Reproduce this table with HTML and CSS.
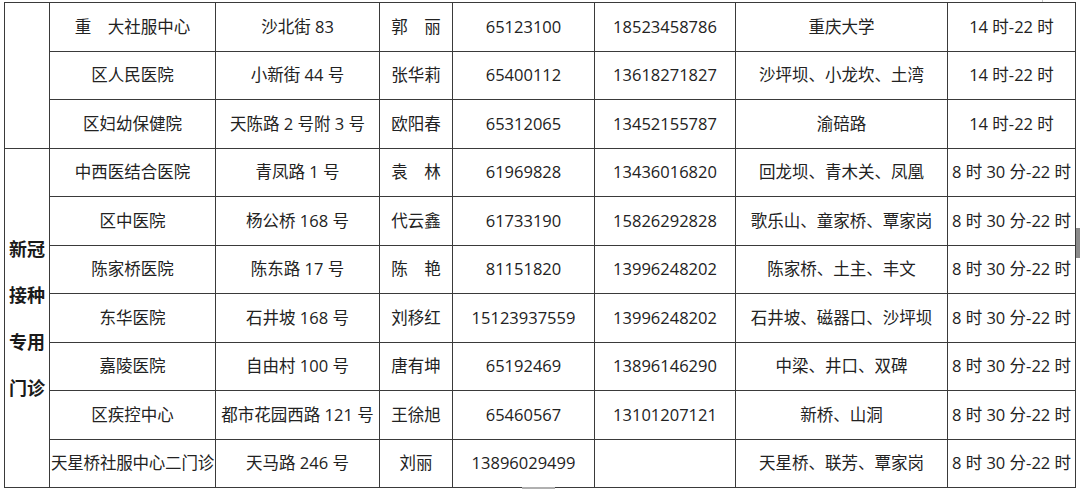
FILE: index.html
```html
<!DOCTYPE html>
<html lang="zh-CN">
<head>
<meta charset="utf-8">
<title>新冠接种专用门诊</title>
<link rel="stylesheet" href="styles.css">
</head>
<body>
<div class="page">
  <table class="clinics">
    <colgroup>
      <col class="c-cat">
      <col class="c-name">
      <col class="c-addr">
      <col class="c-person">
      <col class="c-tel">
      <col class="c-mobile">
      <col class="c-area">
      <col class="c-time">
    </colgroup>
    <tbody>
      <tr>
        <td class="cat" rowspan="3"></td>
        <td>重　大社服中心</td>
        <td>沙北街 83</td>
        <td>郭　丽</td>
        <td>65123100</td>
        <td>18523458786</td>
        <td>重庆大学</td>
        <td>14 时-22 时</td>
      </tr>
      <tr>
        <td>区人民医院</td>
        <td>小新街 44 号</td>
        <td>张华莉</td>
        <td>65400112</td>
        <td>13618271827</td>
        <td>沙坪坝、小龙坎、土湾</td>
        <td>14 时-22 时</td>
      </tr>
      <tr>
        <td>区妇幼保健院</td>
        <td>天陈路 2 号附 3 号</td>
        <td>欧阳春</td>
        <td>65312065</td>
        <td>13452155787</td>
        <td>渝碚路</td>
        <td>14 时-22 时</td>
      </tr>
      <tr>
        <td class="cat" rowspan="7"><div class="cat-text">新冠<br>接种<br>专用<br>门诊</div></td>
        <td>中西医结合医院</td>
        <td>青凤路 1 号</td>
        <td>袁　林</td>
        <td>61969828</td>
        <td>13436016820</td>
        <td>回龙坝、青木关、凤凰</td>
        <td>8 时 30 分-22 时</td>
      </tr>
      <tr>
        <td>区中医院</td>
        <td>杨公桥 168 号</td>
        <td>代云鑫</td>
        <td>61733190</td>
        <td>15826292828</td>
        <td>歌乐山、童家桥、覃家岗</td>
        <td>8 时 30 分-22 时</td>
      </tr>
      <tr>
        <td>陈家桥医院</td>
        <td>陈东路 17 号</td>
        <td>陈　艳</td>
        <td>81151820</td>
        <td>13996248202</td>
        <td>陈家桥、土主、丰文</td>
        <td>8 时 30 分-22 时</td>
      </tr>
      <tr>
        <td>东华医院</td>
        <td>石井坡 168 号</td>
        <td>刘移红</td>
        <td>15123937559</td>
        <td>13996248202</td>
        <td>石井坡、磁器口、沙坪坝</td>
        <td>8 时 30 分-22 时</td>
      </tr>
      <tr>
        <td>嘉陵医院</td>
        <td>自由村 100 号</td>
        <td>唐有坤</td>
        <td>65192469</td>
        <td>13896146290</td>
        <td>中梁、井口、双碑</td>
        <td>8 时 30 分-22 时</td>
      </tr>
      <tr>
        <td>区疾控中心</td>
        <td>都市花园西路 121 号</td>
        <td>王徐旭</td>
        <td>65460567</td>
        <td>13101207121</td>
        <td>新桥、山洞</td>
        <td>8 时 30 分-22 时</td>
      </tr>
      <tr>
        <td class="tight">天星桥社服中心二门诊</td>
        <td>天马路 246 号</td>
        <td>刘丽</td>
        <td>13896029499</td>
        <td></td>
        <td>天星桥、联芳、覃家岗</td>
        <td>8 时 30 分-22 时</td>
      </tr>
    </tbody>
  </table>
  <div class="scroll-thumb"></div>
  <div class="bottom-thumb"></div>
  <div class="top-tick"></div>
</div>
</body>
</html>
```

FILE: styles.css
```css
html, body {
  margin: 0;
  padding: 0;
  background: #ffffff;
}

.page {
  position: relative;
  width: 1080px;
  height: 489px;
  overflow: hidden;
  padding: 2px 0 0 4px;
  box-sizing: border-box;
}

.clinics {
  border-collapse: collapse;
  table-layout: fixed;
  width: 1071px;
  font-family: "Open Sans", "Noto Sans CJK SC", sans-serif;
  font-size: 16.5px;
  color: #222222;
}

.c-cat { width: 45px; }
.c-name { width: 166px; }
.c-addr { width: 164px; }
.c-person { width: 73px; }
.c-tel { width: 142px; }
.c-mobile { width: 141px; }
.c-area { width: 212px; }
.c-time { width: 128px; }

.clinics td {
  border: 1px solid #3a3a3a;
  height: 47.5px;
  padding: 0;
  text-align: center;
  vertical-align: middle;
  white-space: nowrap;
  overflow: visible;
  line-height: 20px;
}

.clinics td.tight {
  letter-spacing: -0.2px;
}

.cat-text {
  font-family: "Noto Sans CJK SC", sans-serif;
  font-weight: 700;
  font-size: 18px;
  line-height: 46.5px;
  color: #1a1a1a;
}

.scroll-thumb {
  position: absolute;
  left: 1076px;
  top: 228px;
  width: 4px;
  height: 30px;
  background: #8a8a8a;
}

.bottom-thumb {
  position: absolute;
  left: 522px;
  top: 487px;
  width: 33px;
  height: 2px;
  background: #b0b0b0;
}

.top-tick {
  position: absolute;
  left: 1042px;
  top: 0;
  width: 1px;
  height: 2px;
  background: #c8c8c8;
}
```
